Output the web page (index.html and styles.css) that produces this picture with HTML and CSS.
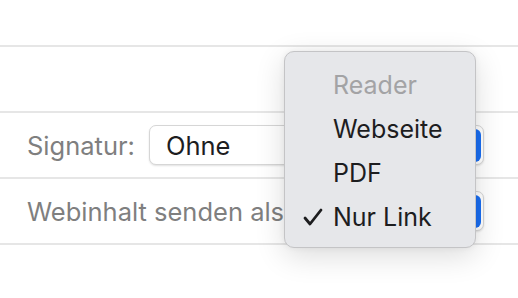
FILE: index.html
```html
<!DOCTYPE html>
<html lang="de">
<head>
  <meta charset="UTF-8">
  <title>Einstellungen</title>
  <link rel="stylesheet" href="styles.css">
</head>
<body>
  <div class="settings">
    <div class="row row-top"></div>
    <div class="row"></div>
    <div class="row">
      <span class="label">Signatur:</span>
      <div class="popup">
        <span class="popup-value">Ohne</span>
        <span class="popup-arrows"></span>
      </div>
    </div>
    <div class="row">
      <span class="label">Webinhalt senden als</span>
      <div class="popup">
        <span class="popup-value"></span>
        <span class="popup-arrows"></span>
      </div>
    </div>
    <div class="row row-last"></div>
  </div>

  <!-- geöffnetes Menü -->
  <div class="menu">
    <div class="menu-item disabled">Reader</div>
    <div class="menu-item">Webseite</div>
    <div class="menu-item">PDF</div>
    <div class="menu-item checked">
      <svg class="check" width="20" height="18" viewBox="0 0 20 18">
        <path d="M2 10 L7 16 L18 2" fill="none" stroke="#1d1d1f" stroke-width="2.8" stroke-linecap="round" stroke-linejoin="round"/>
      </svg>
      Nur Link
    </div>
  </div>
</body>
</html>
```
FILE: styles.css
```css
/* Global */
body {
  font-family: Inter, "Liberation Sans", sans-serif;
  background-color: #fff;
  color: #1d1d1f;
  margin: 0;
  padding: 0;
  width: 518px;
  height: 298px;
  overflow: hidden;
  position: relative;
}
.settings {
  display: flex;
  flex-direction: column;
}
.row {
  height: 64px;
  border-bottom: 2px solid #e6e6e6;
  display: flex;
  align-items: center;
  padding-left: 27px;
  padding-right: 34px;
  gap: 14px;
}
.row-top {
  height: 45px;
}
.row-last {
  border-bottom: none;
}
.label {
  font-size: 25.5px;
  color: #7f7f7f;
  white-space: nowrap;
}
/* Popup button */
.popup {
  flex: 1;
  height: 38px;
  border: 1px solid #d6d6d6;
  border-radius: 7px;
  background-color: #fff;
  box-shadow: 0 1px 2px rgba(0, 0, 0, 0.12);
  display: flex;
  align-items: center;
  justify-content: space-between;
  padding: 0 2px 0 16px;
}
.popup-value {
  font-size: 25.5px;
  color: #1d1d1f;
}
.popup-arrows {
  width: 20px;
  height: 33px;
  border-radius: 6px;
  background-color: #1a6ef2;
}
/* Menu */
.menu {
  position: absolute;
  left: 284px;
  top: 51px;
  width: 192px;
  height: 197px;
  background-color: #e6e7ea;
  border: 1px solid #c4c4c6;
  border-radius: 10px;
  box-shadow: 0 8px 30px rgba(0, 0, 0, 0.14), 0 0 6px rgba(0, 0, 0, 0.06);
  padding-top: 11px;
  box-sizing: border-box;
}
.menu-item {
  height: 44px;
  display: flex;
  align-items: center;
  padding-left: 48px;
  font-size: 25px;
  color: #1d1d1f;
  position: relative;
}
.menu-item.disabled {
  color: #a3a3a5;
}
.check {
  position: absolute;
  left: 18px;
  top: 13px;
}
```
